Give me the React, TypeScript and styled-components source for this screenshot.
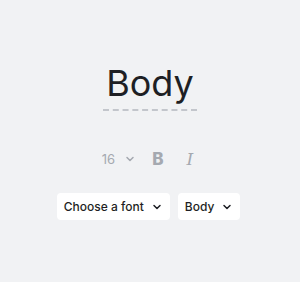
import { createGlobalStyle } from "styled-components";
import styled from "styled-components";

const GlobalStyle = createGlobalStyle`
  html, body {
    margin: 0;
    padding: 0;
    background: #f1f2f4;
  }
  body {
    font-family: Inter, "Noto Sans", sans-serif;
  }
`;

const StyledPanel = styled.div`
  width: 300px;
  height: 282px;
  box-sizing: border-box;
  padding-top: 61px;
  display: flex;
  flex-direction: column;
  align-items: center;
`;

const Preview = styled.div`
  font-size: 36px;
  line-height: 44px;
  color: #1e1f24;
  font-weight: 400;
  padding: 0 3px 4px;
  border-bottom: 2px dashed #c3c6cc;
`;

const Controls = styled.div`
  margin-top: 38px;
  padding-right: 5px;
  display: flex;
  align-items: center;
  color: #a5a9b0;
`;

const SizeSelect = styled.div`
  display: flex;
  align-items: center;
  gap: 10px;
  font-size: 13px;
`;

const ToolIcon = styled.span<{ $italic?: boolean; $gap: number }>`
  margin-left: ${({ $gap }) => $gap}px;
  font-size: 17px;
  line-height: 20px;
  font-weight: ${({ $italic }) => ($italic ? 400 : 800)};
  font-style: ${({ $italic }) => ($italic ? "italic" : "normal")};
  font-family: ${({ $italic }) =>
    $italic ? '"DejaVu Serif", serif' : "Inter, sans-serif"};
`;

const Selectors = styled.div`
  margin-top: 24px;
  padding-right: 3px;
  display: flex;
  gap: 8px;
`;

const Dropdown = styled.button`
  display: flex;
  align-items: center;
  gap: 8px;
  height: 27px;
  padding: 0 8px 0 7px;
  border: none;
  border-radius: 4px;
  background: #ffffff;
  color: #1e1f24;
  font-family: Inter, sans-serif;
  font-size: 12px;
  font-weight: 500;
`;

const Chevron = () => (
  <svg width="10" height="10" viewBox="0 0 10 10" fill="none">
    <path
      d="M2 3.5 L5 6.5 L8 3.5"
      stroke="currentColor"
      strokeWidth="1.5"
      strokeLinecap="round"
      strokeLinejoin="round"
    />
  </svg>
);

const App = () => {
  return (
    <>
      <GlobalStyle />
      <StyledPanel>
        <Preview>Body</Preview>
        <Controls>
          <SizeSelect>
            16
            <Chevron />
          </SizeSelect>
          <ToolIcon $gap={17}>B</ToolIcon>
          <ToolIcon $gap={23} $italic>
            I
          </ToolIcon>
        </Controls>
        <Selectors>
          <Dropdown>
            Choose a font
            <Chevron />
          </Dropdown>
          <Dropdown>
            Body
            <Chevron />
          </Dropdown>
        </Selectors>
      </StyledPanel>
    </>
  );
};

export default App;
